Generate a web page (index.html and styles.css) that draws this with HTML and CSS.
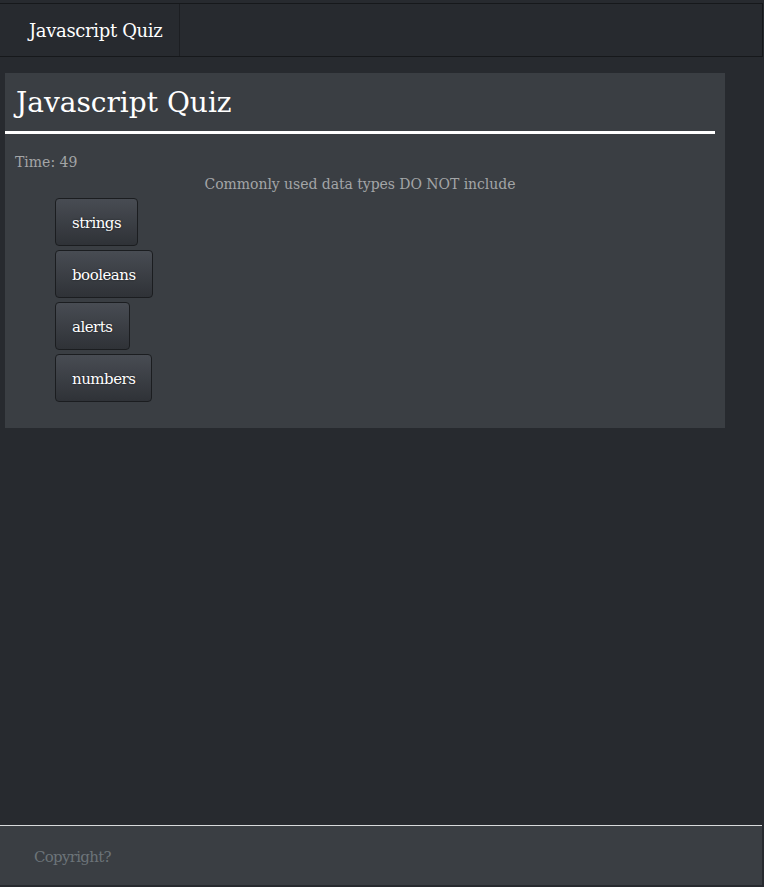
FILE: index.html
```html
<!DOCTYPE html>
<html lang="en">
<head>
<meta charset="utf-8">
<title>Javascript Quiz</title>
<link rel="stylesheet" href="styles.css">
</head>
<body>
<nav class="topbar">
  <div class="brand">Javascript Quiz</div>
</nav>
<main class="card">
  <h1 class="title">Javascript Quiz</h1>
  <div class="timer">Time: 49</div>
  <div class="question">Commonly used data types DO NOT include</div>
  <div class="answers">
    <button class="answer">strings</button>
    <button class="answer">booleans</button>
    <button class="answer">alerts</button>
    <button class="answer">numbers</button>
  </div>
</main>
<footer class="footer">
  <span class="copy">Copyright?</span>
</footer>
</body>
</html>
```
FILE: styles.css
```css
html, body {
  margin: 0;
  padding: 0;
}
body {
  background: #272a2f;
  font-family: "DejaVu Serif", "Liberation Serif", serif;
  min-height: 100vh;
  display: flex;
  flex-direction: column;
  box-sizing: border-box;
  padding-bottom: 2px;
}
.topbar {
  margin-top: 3px;
  width: 762px;
  height: 52px;
  border: 1px solid #16181b;
  border-left: none;
  background: #272a2f;
  display: flex;
}
.brand {
  color: #ffffff;
  font-size: 18px;
  padding: 0 17px 0 29px;
  display: flex;
  align-items: center;
  border-right: 1px solid #1c1e22;
  letter-spacing: -0.35px;
}
.card {
  margin: 16px 0 0 5px;
  width: 710px;
  padding: 0 10px 26px 0;
  background: #3a3e43;
}
.title {
  margin: 0;
  padding: 9px 0 8px 11px;
  color: #ffffff;
  font-weight: normal;
  font-size: 28px;
  line-height: 41px;
  border-bottom: 3px solid #ffffff;
  letter-spacing: 0;
}
.timer {
  margin-top: 18px;
  padding-left: 10px;
  color: #a3a5a7;
  font-size: 14px;
  line-height: 20px;
}
.question {
  text-align: center;
  color: #a3a5a7;
  font-size: 14px;
  line-height: 20px;
  margin-top: 2px;
  letter-spacing: -0.05px;
}
.answers {
  margin: 4px 0 0 50px;
  display: flex;
  flex-direction: column;
  align-items: flex-start;
  gap: 4px;
}
.answer {
  height: 48px;
  padding: 1px 16px 0;
  border: 1px solid #1b1d20;
  border-radius: 4px;
  background: linear-gradient(#484c53, #2f3237);
  color: #ffffff;
  font-family: "DejaVu Serif", "Liberation Serif", serif;
  font-size: 15px;
  text-shadow: 0 0 2px rgba(0,0,0,0.6);
  letter-spacing: -0.5px;
}
.footer {
  margin-top: auto;
  width: 762px;
  height: 59px;
  border-top: 1px solid #d8dadc;
  background: #3a3e43;
  display: flex;
  align-items: center;
}
.copy {
  padding: 2px 0 0 34px;
  color: #6c7479;
  font-size: 15px;
  letter-spacing: -0.7px;
}
```
